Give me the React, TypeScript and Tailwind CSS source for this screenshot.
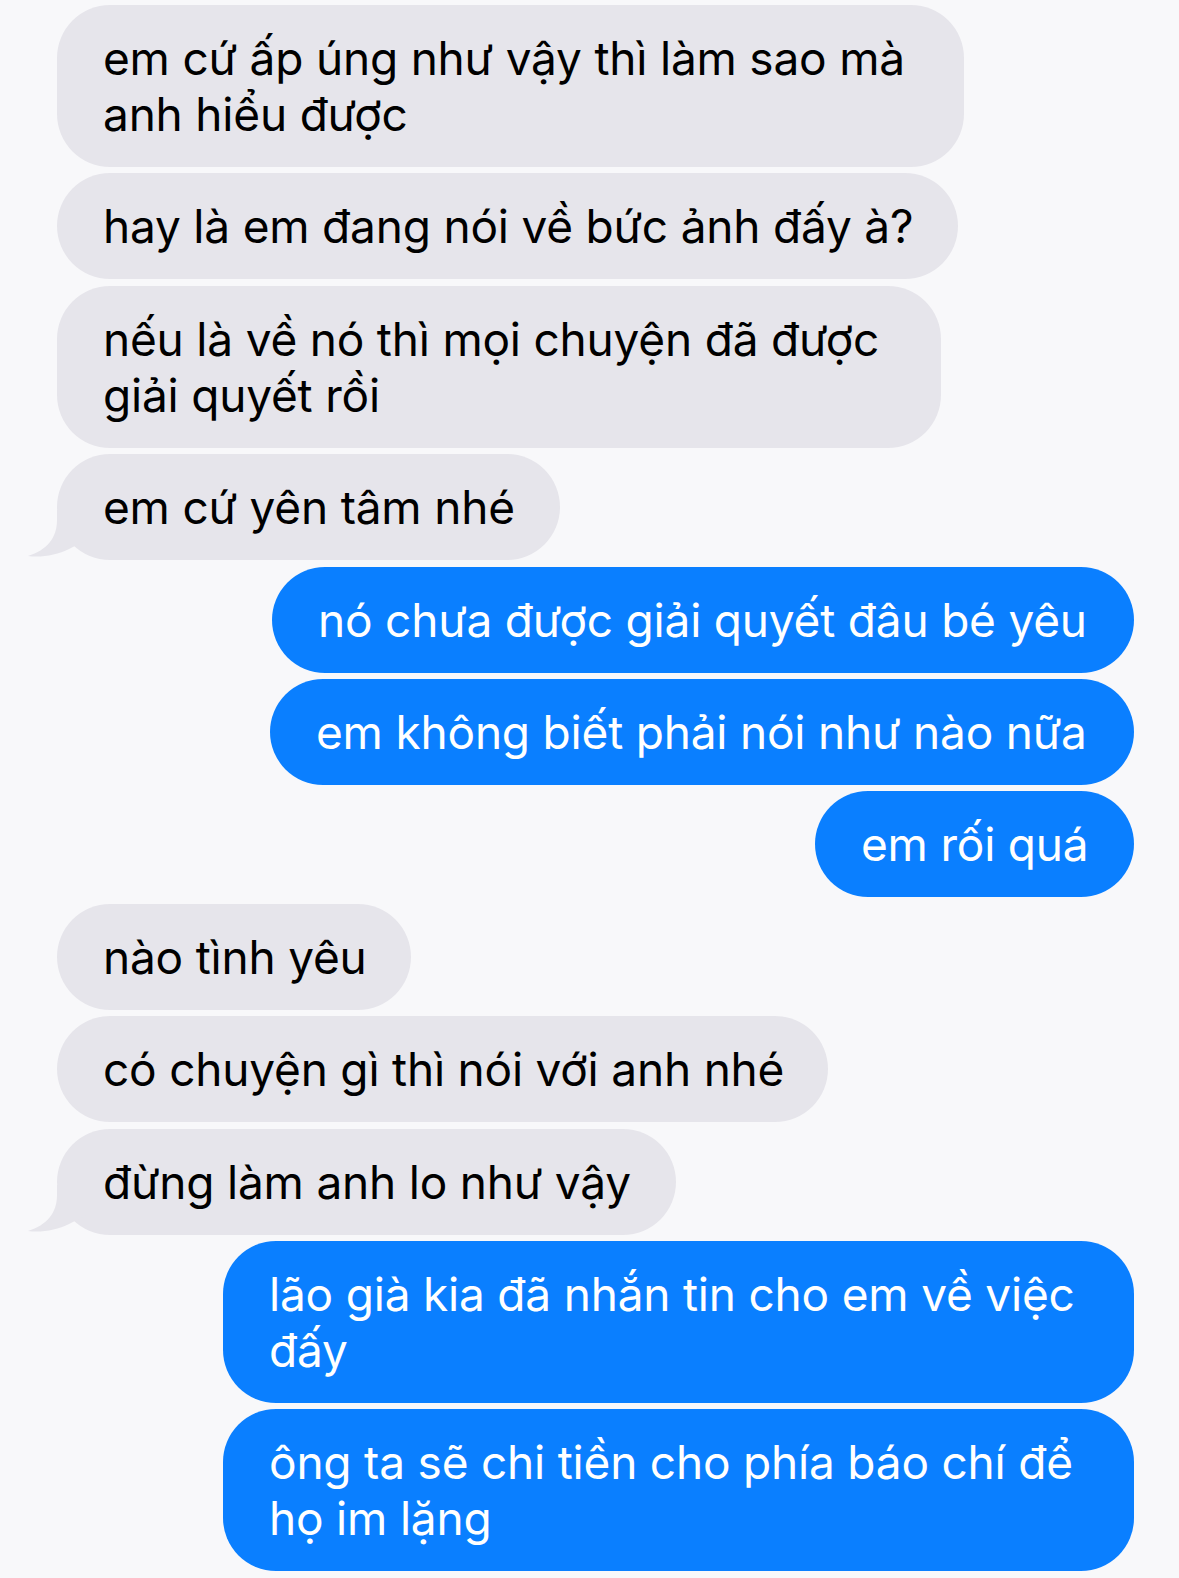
import React from 'react';

type Msg = {
  me: boolean;
  lines: string[];
  w: string;
  tail?: boolean;
};

const messages: Msg[] = [
  { me: false, lines: ['em cứ ấp úng như vậy thì làm sao mà', 'anh hiểu được'], w: 'w-[907px]' },
  { me: false, lines: ['hay là em đang nói về bức ảnh đấy à?'], w: 'w-[901px]' },
  { me: false, lines: ['nếu là về nó thì mọi chuyện đã được', 'giải quyết rồi'], w: 'w-[884px]' },
  { me: false, lines: ['em cứ yên tâm nhé'], w: 'w-[503px]', tail: true },
  { me: true, lines: ['nó chưa được giải quyết đâu bé yêu'], w: 'w-[862px]' },
  { me: true, lines: ['em không biết phải nói như nào nữa'], w: 'w-[864px]' },
  { me: true, lines: ['em rối quá'], w: 'w-[319px]' },
  { me: false, lines: ['nào tình yêu'], w: 'w-[354px]' },
  { me: false, lines: ['có chuyện gì thì nói với anh nhé'], w: 'w-[771px]' },
  { me: false, lines: ['đừng làm anh lo như vậy'], w: 'w-[619px]', tail: true },
  { me: true, lines: ['lão già kia đã nhắn tin cho em về việc', 'đấy'], w: 'w-[911px]' },
  { me: true, lines: ['ông ta sẽ chi tiền cho phía báo chí để', 'họ im lặng'], w: 'w-[911px]' },
];

function Tail() {
  return (
    <svg
      className="absolute left-[-30px] bottom-0"
      width="60"
      height="50"
      viewBox="0 0 60 50"
    >
      <path d="M30 0 L30 10 C30 28 20 40 1 46 C14 48 30 45 42 39 L60 30 L60 0 Z" fill="#e6e5eb" />
    </svg>
  );
}

export default function App() {
  return (
    <div
      className="min-h-[1578px] w-full bg-[#f8f8fa] pt-[5px] pb-[8px] flex flex-col gap-[6.4px]"
      style={{ fontFamily: 'Inter, "Noto Sans", sans-serif' }}
    >
      {messages.map((m, i) => (
        <div
          key={i}
          className={`relative rounded-[53px] px-[46px] py-[25px] text-[46px] leading-[56px] tracking-[-0.2px] whitespace-nowrap ${m.w} ${
            m.me
              ? 'self-end mr-[45px] bg-[#0a7fff] text-white'
              : 'self-start ml-[57px] bg-[#e6e5eb] text-black'
          }`}
        >
          {m.tail && <Tail />}
          <div className="relative">
            {m.lines.map((l, j) => (
              <div key={j}>{l}</div>
            ))}
          </div>
        </div>
      ))}
    </div>
  );
}
